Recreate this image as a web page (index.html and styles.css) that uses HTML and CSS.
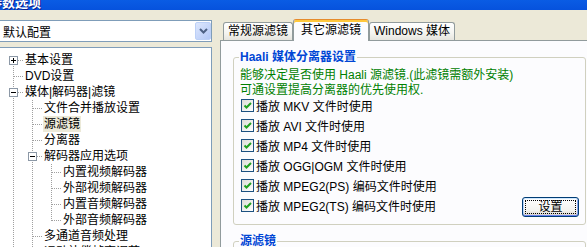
FILE: index.html
```html
<!DOCTYPE html>
<html lang="zh-CN">
<head>
  <meta charset="UTF-8" />
  <title>参数选项</title>
  <link rel="stylesheet" href="styles.css">
</head>
<body>
  <div class="titlebar"><span class="title">参数选项</span></div>

  <div class="main">
    <div class="side">
      <div class="combo">
        <span class="combo-text">默认配置</span>
        <span class="combo-btn">
          <svg width="9" height="6" viewBox="0 0 9 6"><path d="M1 1l3.5 3.5L8 1" fill="none" stroke="#4d6185" stroke-width="2"/></svg>
        </span>
      </div>

      <div class="tree">
        <div class="row">
          <span class="c first"><svg class="box" width="9" height="9"><rect x=".5" y=".5" width="8" height="8" fill="#fff" stroke="#8c98a6"/><path d="M2 4.5h5M4.5 2v5" stroke="#000"/></svg></span>
          <span class="label">基本设置</span>
        </div>
        <div class="row"><span class="c"></span><span class="label">DVD设置</span></div>
        <div class="row">
          <span class="c"><svg class="box" width="9" height="9"><rect x=".5" y=".5" width="8" height="8" fill="#fff" stroke="#8c98a6"/><path d="M2 4.5h5" stroke="#000"/></svg></span>
          <span class="label">媒体|解码器|滤镜</span>
        </div>
        <div class="row"><span class="g"></span><span class="c"></span><span class="label">文件合并播放设置</span></div>
        <div class="row"><span class="g"></span><span class="c"></span><span class="label sel">源滤镜</span></div>
        <div class="row"><span class="g"></span><span class="c"></span><span class="label">分离器</span></div>
        <div class="row">
          <span class="g"></span>
          <span class="c"><svg class="box" width="9" height="9"><rect x=".5" y=".5" width="8" height="8" fill="#fff" stroke="#8c98a6"/><path d="M2 4.5h5" stroke="#000"/></svg></span>
          <span class="label">解码器应用选项</span>
        </div>
        <div class="row"><span class="g"></span><span class="g"></span><span class="c"></span><span class="label">内置视频解码器</span></div>
        <div class="row"><span class="g"></span><span class="g"></span><span class="c"></span><span class="label">外部视频解码器</span></div>
        <div class="row"><span class="g"></span><span class="g"></span><span class="c"></span><span class="label">内置音频解码器</span></div>
        <div class="row"><span class="g"></span><span class="g"></span><span class="c end"></span><span class="label">外部音频解码器</span></div>
        <div class="row"><span class="g"></span><span class="c"></span><span class="label">多通道音频处理</span></div>
        <div class="row"><span class="g"></span><span class="c"></span><span class="label">运动补偿帧率调节</span></div>
      </div>
    </div>

    <div class="pane">
      <div class="tabs">
        <span class="tab">常规源滤镜</span>
        <span class="tab active">其它源滤镜</span>
        <span class="tab">Windows 媒体</span>
      </div>
      <div class="page">
        <fieldset class="group">
          <legend>Haali 媒体分离器设置</legend>
          <p class="note">能够决定是否使用 Haali 源滤镜.(此滤镜需额外安装)<br>可通设置提高分离器的优先使用权.</p>
          <div class="check"><span class="cb"><svg width="11" height="11"><path d="M2.5 5.5l2 2 4.5-4.5" fill="none" stroke="#21a121" stroke-width="2"/></svg></span>播放 MKV 文件时使用</div>
          <div class="check"><span class="cb"><svg width="11" height="11"><path d="M2.5 5.5l2 2 4.5-4.5" fill="none" stroke="#21a121" stroke-width="2"/></svg></span>播放 AVI 文件时使用</div>
          <div class="check"><span class="cb"><svg width="11" height="11"><path d="M2.5 5.5l2 2 4.5-4.5" fill="none" stroke="#21a121" stroke-width="2"/></svg></span>播放 MP4 文件时使用</div>
          <div class="check"><span class="cb"><svg width="11" height="11"><path d="M2.5 5.5l2 2 4.5-4.5" fill="none" stroke="#21a121" stroke-width="2"/></svg></span>播放 OGG|OGM 文件时使用</div>
          <div class="check"><span class="cb"><svg width="11" height="11"><path d="M2.5 5.5l2 2 4.5-4.5" fill="none" stroke="#21a121" stroke-width="2"/></svg></span>播放 MPEG2(PS) 编码文件时使用</div>
          <div class="check"><span class="cb"><svg width="11" height="11"><path d="M2.5 5.5l2 2 4.5-4.5" fill="none" stroke="#21a121" stroke-width="2"/></svg></span>播放 MPEG2(TS) 编码文件时使用
            <button class="btn"><span>设置</span></button>
          </div>
        </fieldset>
        <fieldset class="group second">
          <legend>源滤镜</legend>
        </fieldset>
      </div>
    </div>
  </div>
</body>
</html>
```

FILE: styles.css
```css
* {
  box-sizing: border-box;
}
html, body {
  overflow: hidden;
}
body {
  margin: 0;
  height: 247px;
  background: #ece9d8;
  font-family: "Liberation Sans", "Noto Sans CJK SC", sans-serif;
  font-size: 12px;
  color: #000;
}

/* window caption, mostly scrolled off */
.titlebar {
  height: 10px;
  overflow: hidden;
  background: linear-gradient(#0a5ce4, #0652dd);
}
.title {
  display: block;
  margin: -5px 0 0 -11px;
  font: bold 13px/14px "Noto Sans CJK SC", sans-serif;
  color: #fff;
  text-shadow: 1px 1px #0a1e8c;
}

.main {
  display: flex;
  padding-top: 10px;
}

/* left column */
.side {
  flex: none;
  width: 214px;
  margin-left: -2px;
}
.combo {
  display: flex;
  align-items: center;
  height: 22px;
  padding-left: 4px;
  border: 1px solid #7f9db9;
  background: #fff;
}
.combo-text {
  flex: 1;
}
.combo-btn {
  display: flex;
  align-items: center;
  justify-content: center;
  width: 16px;
  height: 18px;
  border: 1px solid #bcd0f7;
  border-radius: 2px;
  background: linear-gradient(135deg, #dde7fd, #b3c8f7);
}
.tree {
  margin-top: 5px;
  height: 220px;
  padding: 4px 0 0 5px;
  border: 1px solid #7f9db9;
  background: #fff;
}
.row {
  display: flex;
  height: 16px;
  white-space: nowrap;
}
.g, .c {
  position: relative;
  flex: none;
  width: 19px;
  height: 16px;
}
.g::before, .c::before {
  content: "";
  position: absolute;
  left: 9px;
  top: 0;
  width: 1px;
  height: 16px;
  background: linear-gradient(#a0a0a0 50%, transparent 50%) 0 0 / 1px 2px;
}
.c.first::before {
  top: 8px;
  height: 8px;
}
.c.end::before {
  height: 9px;
}
.c::after {
  content: "";
  position: absolute;
  left: 10px;
  right: 0;
  top: 8px;
  height: 1px;
  background: linear-gradient(to right, #a0a0a0 50%, transparent 50%) 0 0 / 2px 1px;
}
.box {
  position: absolute;
  left: 5px;
  top: 4px;
  z-index: 1;
}
.label {
  margin-left: 1px;
  padding: 0 1px;
  line-height: 16px;
}
.label.sel {
  background: #ece9d8;
}

/* right column */
.pane {
  flex: none;
  width: 380px;
  margin-left: 8px;
}
.tabs {
  display: flex;
  align-items: flex-end;
  height: 21px;
  margin-top: -1px;
  padding-left: 3px;
}
.tab {
  height: 18px;
  padding: 0 4px;
  border: 1px solid #919b9c;
  border-bottom: 0;
  border-radius: 3px 3px 0 0;
  background: linear-gradient(#fff, #f4f4f0 60%, #e6e5de);
  line-height: 17px;
  white-space: nowrap;
}
.tab.active {
  position: relative;
  height: 22px;
  margin-bottom: -1px;
  padding: 0 7px;
  border-top-color: #e68b2c;
  background: #fcfcfe;
  box-shadow: inset 0 2px #ffc83c;
  line-height: 21px;
}
.page {
  height: 230px;
  padding: 8px 13px 0 12px;
  border: 1px solid #919b9c;
  background: #fcfcfe;
}
.group {
  margin: 0;
  min-width: 0;
  padding: 3px 6px 9px 6px;
  border: 1px solid #d0d0bf;
  border-radius: 3px;
}
.group legend {
  margin-left: -1px;
  padding: 0 1px;
  font-weight: bold;
  line-height: 16px;
  color: #0046d5;
}
.second {
  margin-top: 8px;
  height: 60px;
}
.note {
  margin: 0 0 -2px;
  line-height: 15px;
  color: #008000;
}
.check {
  display: flex;
  align-items: center;
  height: 19.9px;
  white-space: nowrap;
}
.cb {
  display: flex;
  align-items: center;
  justify-content: center;
  width: 13px;
  height: 13px;
  margin: 0 2px 0 1px;
  border: 1px solid #1c5180;
  background: linear-gradient(135deg, #dcdcd7, #fff);
}
.btn {
  margin: 3px 0 0 auto;
  width: 57px;
  height: 20px;
  padding: 2px;
  border: 1px solid #003c74;
  border-radius: 3px;
  background: linear-gradient(#fff, #f3f3ef 70%, #d6d0c5);
  box-shadow: inset 0 1px #cee7ff, inset 0 -1px #6982ee, inset 1px 0 #b8d4fa, inset -1px 0 #8ca5ee;
  font: inherit;
  color: #000;
}
.btn span {
  display: block;
  height: 100%;
  border: 1px dotted #000;
  line-height: 12px;
}
```
